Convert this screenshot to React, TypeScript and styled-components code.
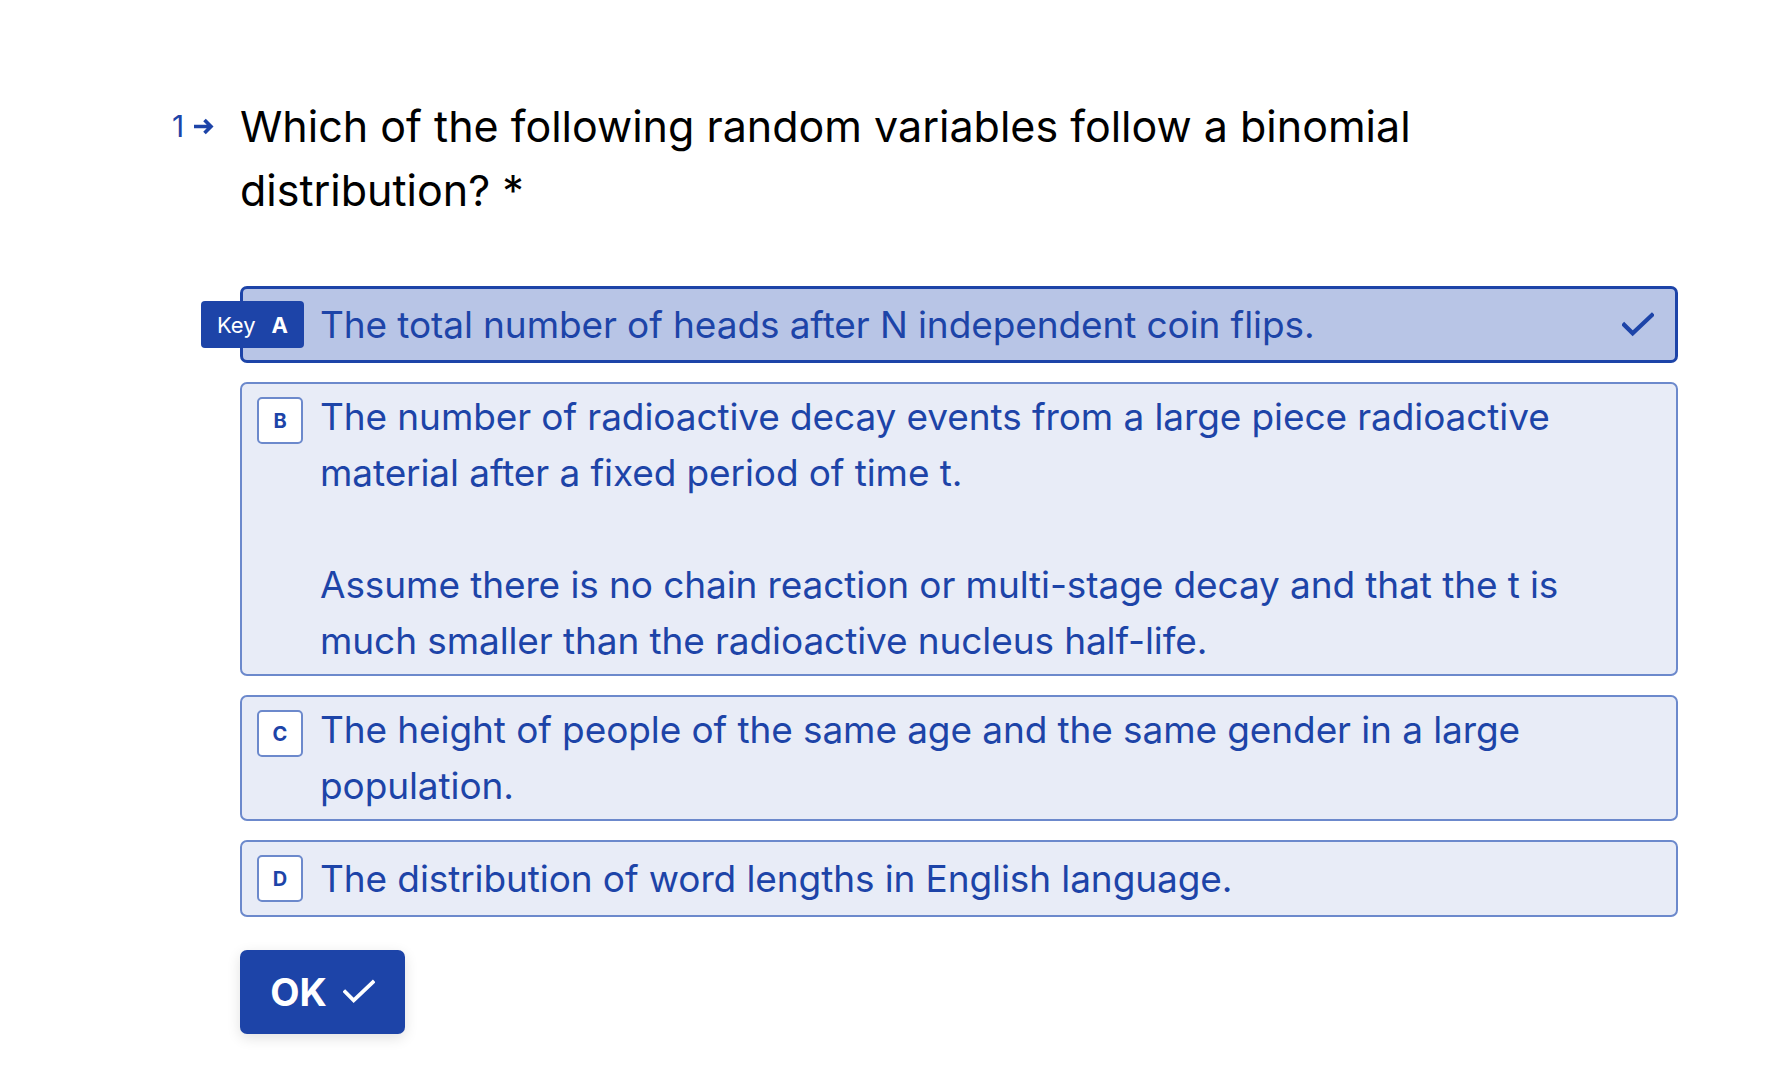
import React from "react";
import styled, { createGlobalStyle } from "styled-components";

const GlobalStyle = createGlobalStyle`
  html, body { margin: 0; padding: 0; background: #ffffff; }
  body { font-family: Inter, "Noto Sans", "Liberation Sans", sans-serif; -webkit-font-smoothing: antialiased; }
  * { box-sizing: border-box; }
`;

const BLUE = "#1d44a8";

const Page = styled.div`
  padding: 94px 0 40px 240px;
  width: 1678px;
`;

const QuestionRow = styled.div`
  display: flex;
  margin-left: -72px;
`;

const Counter = styled.div`
  width: 72px;
  flex: none;
  display: flex;
  align-items: center;
  gap: 9px;
  height: 64px;
  padding-left: 4px;
  color: ${BLUE};
  font-size: 30px;
  line-height: 64px;
`;

const QuestionText = styled.h1`
  margin: 0;
  font-size: 43px;
  font-weight: 400;
  line-height: 64px;
  color: #000;
  max-width: 1240px;
`;

const Options = styled.div`
  margin-top: 64px;
  display: flex;
  flex-direction: column;
  gap: 19px;
`;

const Card = styled.div<{ $selected?: boolean }>`
  position: relative;
  display: flex;
  align-items: flex-start;
  gap: 17px;
  padding: ${(p) => (p.$selected ? "4px 17px 4px 14px" : "5px 40px 5px 15px")};
  border: ${(p) => (p.$selected ? `3px solid ${BLUE}` : "2px solid #6c89cc")};
  border-radius: 7px;
  background: ${(p) => (p.$selected ? "#b8c5e6" : "#e8ecf7")};
  color: ${BLUE};
`;

const LetterBox = styled.div`
  flex: none;
  width: 46px;
  height: 47px;
  margin: 8px 0;
  border: 2px solid #6c89cc;
  border-radius: 5px;
  background: #ffffff;
  display: flex;
  align-items: center;
  justify-content: center;
  font-weight: 700;
  font-size: 20px;
  color: ${BLUE};
`;

const KeyBadge = styled.div`
  position: absolute;
  left: -42px;
  top: 12px;
  width: 103px;
  height: 47px;
  border-radius: 4px;
  background: ${BLUE};
  color: #fff;
  display: flex;
  align-items: center;
  justify-content: center;
  gap: 16px;
  font-size: 22px;
`;

const KeyLetter = styled.span`
  font-weight: 700;
`;

const Spacer = styled.div`
  width: 46px;
  height: 47px;
  margin: 8px 0;
  flex: none;
`;

const OptionText = styled.div`
  flex: 1;
  align-self: center;
  font-size: 37px;
  line-height: 56px;
  letter-spacing: -0.1px;
`;

const Para = styled.p`
  margin: 0;
  & + & { margin-top: 56px; }
`;

const CheckWrap = styled.div`
  flex: none;
  align-self: center;
  display: flex;
  margin-right: 4px;
`;

const OkButton = styled.button`
  margin-top: 33px;
  width: 165px;
  height: 84px;
  border: none;
  border-radius: 7px;
  background: ${BLUE};
  color: #fff;
  font-family: inherit;
  font-weight: 700;
  font-size: 38px;
  display: flex;
  align-items: center;
  justify-content: center;
  gap: 16px;
  box-shadow: 0 4px 14px rgba(0, 0, 0, 0.12);
  cursor: pointer;
`;

const Check = ({ size = 32, color = BLUE, sw = 4 }: { size?: number; color?: string; sw?: number }) => (
  <svg width={size} height={size * 0.8} viewBox="0 0 30 24" fill="none">
    <path d="M2 12 L10 20 L28 3" stroke={color} strokeWidth={sw} strokeLinecap="square" strokeLinejoin="miter" />
  </svg>
);

const Arrow = () => (
  <svg width="21" height="17" viewBox="0 0 21 17" fill="none">
    <path d="M1 8.5 H18 M11.5 2 L18 8.5 L11.5 15" stroke={BLUE} strokeWidth="3.6" />
  </svg>
);

export default function App() {
  return (
    <>
      <GlobalStyle />
      <Page>
        <QuestionRow>
          <Counter>
            <span>1</span>
            <Arrow />
          </Counter>
          <QuestionText>Which of the following random variables follow a binomial distribution? *</QuestionText>
        </QuestionRow>
        <Options>
          <Card $selected>
            <KeyBadge>
              <span>Key</span>
              <KeyLetter>A</KeyLetter>
            </KeyBadge>
            <Spacer />
            <OptionText>The total number of heads after N independent coin flips.</OptionText>
            <CheckWrap>
              <Check />
            </CheckWrap>
          </Card>
          <Card>
            <LetterBox>B</LetterBox>
            <OptionText>
              <Para>The number of radioactive decay events from a large piece radioactive material after a fixed period of time t.</Para>
              <Para>Assume there is no chain reaction or multi-stage decay and that the t is much smaller than the radioactive nucleus half-life.</Para>
            </OptionText>
          </Card>
          <Card>
            <LetterBox>C</LetterBox>
            <OptionText>The height of people of the same age and the same gender in a large population.</OptionText>
          </Card>
          <Card>
            <LetterBox>D</LetterBox>
            <OptionText>The distribution of word lengths in English language.</OptionText>
          </Card>
        </Options>
        <OkButton>
          OK
          <Check size={32} color="#fff" sw={3.5} />
        </OkButton>
      </Page>
    </>
  );
}
